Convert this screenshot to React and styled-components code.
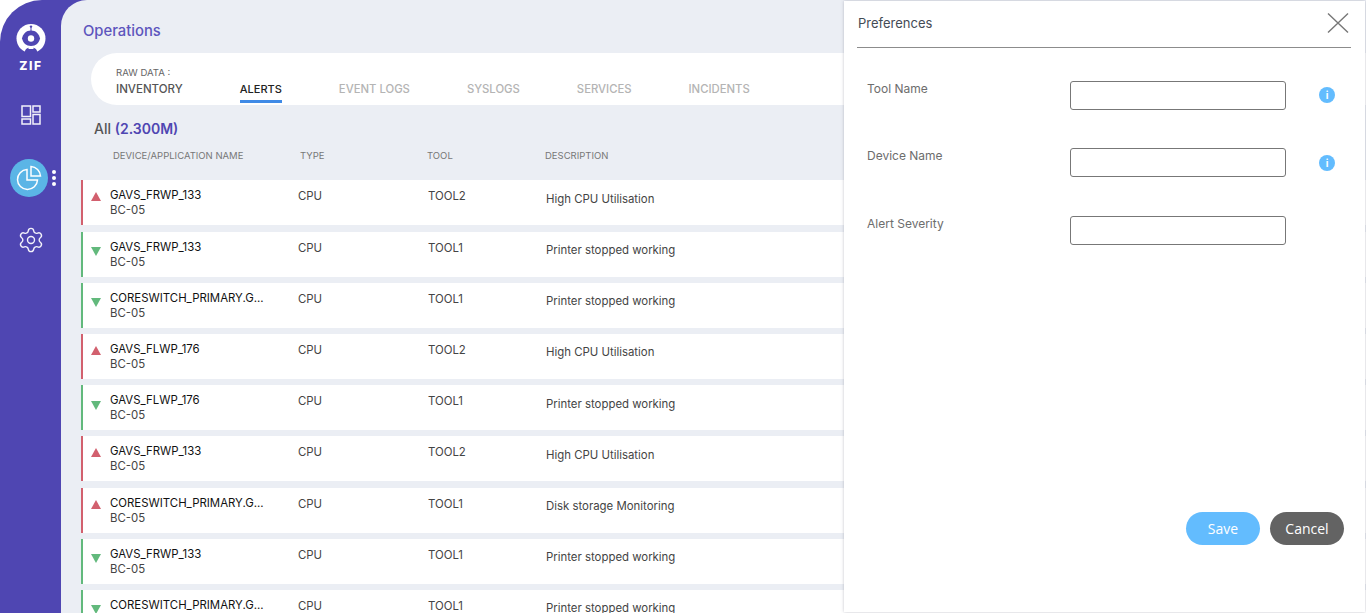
import styled, { createGlobalStyle } from "styled-components";
import { Settings } from "lucide-react";

const GlobalStyle = createGlobalStyle`
  html, body {
    margin: 0;
    padding: 0;
    height: 100%;
    background: #fff;
    overflow: hidden;
    font-family: Inter, "Liberation Sans", sans-serif;
  }
  * {
    box-sizing: border-box;
  }
`;

const Shell = styled.div`
  position: relative;
  display: flex;
  width: 1366px;
  height: 613px;
  overflow: hidden;
  background: #4f46b2;
  border-top-left-radius: 42px;
`;

const Sidebar = styled.nav`
  flex: 0 0 61px;
  display: flex;
  flex-direction: column;
  align-items: center;
  padding-top: 24px;
`;

const Logo = styled.div`
  display: flex;
  flex-direction: column;
  align-items: center;
  height: 76px;
  padding-left: 1px;
`;

const LogoText = styled.span`
  margin-top: 6px;
  font-size: 12px;
  font-weight: 800;
  letter-spacing: 1.6px;
  color: #fff;
  line-height: 13px;
`;

const NavIcon = styled.div`
  display: flex;
  justify-content: center;
  align-items: center;
  height: 30px;
  margin-bottom: ${(p) => p.$gap}px;
  color: #f2f1fa;
`;

const ActiveWrap = styled.div`
  display: flex;
  align-items: center;
  gap: 4px;
  width: 61px;
  padding-left: 10px;
  margin-bottom: 28px;
`;

const ActiveCircle = styled.div`
  display: flex;
  justify-content: center;
  align-items: center;
  width: 38px;
  height: 38px;
  border-radius: 50%;
  background: #5bb5e6;
`;

const Dots = styled.div`
  display: flex;
  flex-direction: column;
  gap: 2px;
`;

const Dot = styled.span`
  width: 4px;
  height: 4px;
  border-radius: 50%;
  background: #fff;
`;

const Main = styled.main`
  flex: 1;
  min-width: 0;
  background: #ebeef4;
  border-top-left-radius: 26px;
  padding: 22px 0 0 20px;
`;

const PageTitle = styled.h1`
  margin: 0 0 13px 2px;
  font-size: 14.8px;
  line-height: 18px;
  font-weight: 500;
  color: #5d55bd;
`;

const TabBar = styled.div`
  display: flex;
  align-items: flex-end;
  gap: 57px;
  height: 52px;
  margin-left: 10px;
  padding: 0 0 2px 25px;
  background: #fff;
  border-radius: 26px 0 0 26px;
`;

const TabGroup = styled.div`
  display: flex;
  flex-direction: column;
`;

const RawLabel = styled.span`
  font-size: 9.6px;
  line-height: 12px;
  color: #666;
  margin-bottom: 2px;
`;

const Tab = styled.span`
  display: block;
  height: 22px;
  padding-top: 1px;
  font-size: ${(p) => (p.$active ? 11 : p.$muted ? 11.3 : 11.5)}px;
  line-height: 14px;
  font-weight: 500;
  color: ${(p) => (p.$active ? "#222" : p.$muted ? "#b4b4b4" : "#555")};
  border-bottom: ${(p) => (p.$active ? "3px solid #3f8ae6" : "none")};
`;

const CountLine = styled.div`
  margin: 15px 0 0 13px;
  font-size: 14px;
  line-height: 18px;
  font-weight: 500;
  color: #555;
`;

const Count = styled.span`
  color: #4f46b2;
  font-weight: 600;
`;

const Columns = styled.div`
  display: grid;
  grid-template-columns: 187px 127px 118px 1fr;
  margin: 10px 0 0 32px;
  height: 32.4px;
  padding-top: 2px;
  font-size: 9.5px;
  line-height: 12px;
  color: #777;
`;

const Row = styled.div`
  display: grid;
  grid-template-columns: 27px 188px 130px 118px 1fr;
  height: 45px;
  margin-bottom: 6.2px;
  background: #fff;
  border-left: 2px solid ${(p) => (p.$up ? "#d2606e" : "#62b97c")};
  align-items: start;
  font-size: 11.4px;
  line-height: 15px;
  color: #444;
`;

const Marker = styled.div`
  width: 0;
  height: 0;
  margin: ${(p) => (p.$up ? 12 : 15.5)}px 0 0 8px;
  border-left: 5px solid transparent;
  border-right: 5px solid transparent;
  border-bottom: ${(p) => (p.$up ? "9px solid #d2606e" : "none")};
  border-top: ${(p) => (p.$up ? "none" : "9px solid #62b97c")};
`;

const NameCell = styled.div`
  padding-top: 8px;
`;

const DeviceName = styled.div`
  color: #111;
`;

const Cell = styled.div`
  padding-top: ${(p) => p.$top}px;
`;

const Drawer = styled.aside`
  position: absolute;
  top: 1px;
  right: 1px;
  bottom: 1px;
  width: 521px;
  display: flex;
  flex-direction: column;
  background: #fff;
  box-shadow: 0 0 3px rgba(90, 90, 110, 0.35);
  padding: 0 14px 67px 13px;
`;

const DrawerHead = styled.header`
  display: flex;
  justify-content: space-between;
  align-items: center;
  height: 47px;
  padding: 0 2px 3px 1px;
  border-bottom: 1px solid #8c8c8c;
  font-size: 13px;
  color: #444b55;
`;

const CloseIcon = styled.svg`
  width: 22px;
  height: 22px;
`;

const Form = styled.form`
  flex: 1;
  padding: 33px 0 0 10px;
`;

const Field = styled.div`
  display: grid;
  grid-template-columns: 203px 216px 49px;
  align-items: start;
  height: ${(p) => p.$h}px;
`;

const FieldLabel = styled.label`
  font-size: 12px;
  line-height: 16px;
  color: #6d6d6d;
`;

const FieldInput = styled.input`
  width: 216px;
  height: 29px;
  border: 1px solid #777;
  border-radius: 3px;
  background: #fff;
`;

const Info = styled.span`
  justify-self: end;
  display: flex;
  justify-content: center;
  align-items: center;
  width: 16px;
  height: 16px;
  margin-top: ${(p) => p.$top}px;
  border-radius: 50%;
  background: #63bcfe;
  color: #fff;
  font-size: 10px;
  font-weight: 700;
`;

const Actions = styled.div`
  display: flex;
  justify-content: flex-end;
  gap: 10px;
  padding-right: 7px;
`;

const ActionButton = styled.button`
  width: 74px;
  height: 33px;
  border: none;
  border-radius: 17px;
  background: ${(p) => (p.$primary ? "#63bcfe" : "#636363")};
  color: #fff;
  font-family: "Open Sans", sans-serif;
  font-size: 14px;
`;

const tabs = ["ALERTS", "EVENT LOGS", "SYSLOGS", "SERVICES", "INCIDENTS"];

const rows = [
  { up: true, name: "GAVS_FRWP_133", tool: "TOOL2", desc: "High CPU Utilisation" },
  { up: false, name: "GAVS_FRWP_133", tool: "TOOL1", desc: "Printer stopped working" },
  { up: false, name: "CORESWITCH_PRIMARY.G...", tool: "TOOL1", desc: "Printer stopped working" },
  { up: true, name: "GAVS_FLWP_176", tool: "TOOL2", desc: "High CPU Utilisation" },
  { up: false, name: "GAVS_FLWP_176", tool: "TOOL1", desc: "Printer stopped working" },
  { up: true, name: "GAVS_FRWP_133", tool: "TOOL2", desc: "High CPU Utilisation" },
  { up: true, name: "CORESWITCH_PRIMARY.G...", tool: "TOOL1", desc: "Disk storage Monitoring" },
  { up: false, name: "GAVS_FRWP_133", tool: "TOOL1", desc: "Printer stopped working" },
  { up: false, name: "CORESWITCH_PRIMARY.G...", tool: "TOOL1", desc: "Printer stopped working" },
];

const fields = [
  { label: "Tool Name", info: true, h: 67, top: 6 },
  { label: "Device Name", info: true, h: 68, top: 7 },
  { label: "Alert Severity", info: false, h: 40, top: 0 },
];

function ZifMark() {
  return (
    <svg width="30" height="29" viewBox="0 0 30 29">
      <circle cx="15" cy="14.5" r="14.5" fill="#fff" />
      <circle cx="15" cy="2.6" r="1.2" fill="#4f46b2" />
      <rect x="14.5" y="3" width="1" height="4" fill="#4f46b2" />
      <path
        d="M15 6.5C20 6.5 23 10 24 14.5C23 19 20 22 15 22S7 19 6 14.5C7 10 10 6.5 15 6.5Z"
        fill="#4f46b2"
      />
      <circle cx="15" cy="14.5" r="3.2" fill="#fff" />
      <path d="M8.5 29C9 25 11 23.5 15 23.5S21 25 21.5 29Z" fill="#4f46b2" />
      <rect x="12.5" y="22" width="5" height="3" fill="#fff" />
    </svg>
  );
}

function LayoutIcon() {
  return (
    <svg width="20" height="20" viewBox="0 0 20 20" fill="none" stroke="currentColor" strokeWidth="1.5">
      <rect x="1" y="1" width="8.5" height="10.5" />
      <rect x="12" y="1" width="7" height="6" />
      <rect x="1" y="14" width="8.5" height="5" />
      <rect x="12" y="9.5" width="7" height="9.5" />
    </svg>
  );
}

function PieIcon() {
  return (
    <svg width="26" height="26" viewBox="0 0 26 26" fill="none" stroke="#fff" strokeWidth="1.5">
      <path d="M11 4.5A10 10 0 1 0 21.5 15H11Z" />
      <path d="M15 1.5A10 10 0 0 1 24.5 11H15Z" />
    </svg>
  );
}

export default function App() {
  return (
    <>
      <GlobalStyle />
      <Shell>
        <Sidebar>
          <Logo>
            <ZifMark />
            <LogoText>ZIF</LogoText>
          </Logo>
          <NavIcon $gap={29}>
            <LayoutIcon />
          </NavIcon>
          <ActiveWrap>
            <ActiveCircle>
              <PieIcon />
            </ActiveCircle>
            <Dots>
              <Dot />
              <Dot />
              <Dot />
            </Dots>
          </ActiveWrap>
          <NavIcon $gap={0}>
            <Settings size={28} strokeWidth={1.2} />
          </NavIcon>
        </Sidebar>

        <Main>
          <PageTitle>Operations</PageTitle>
          <TabBar>
            <TabGroup>
              <RawLabel>RAW DATA :</RawLabel>
              <Tab>INVENTORY</Tab>
            </TabGroup>
            {tabs.map((tab, i) => (
              <Tab key={tab} $active={i === 0} $muted={i > 0}>
                {tab}
              </Tab>
            ))}
          </TabBar>

          <CountLine>
            All <Count>(2.300M)</Count>
          </CountLine>
          <Columns>
            <span>DEVICE/APPLICATION NAME</span>
            <span>TYPE</span>
            <span>TOOL</span>
            <span>DESCRIPTION</span>
          </Columns>

          {rows.map((row, i) => (
            <Row key={i} $up={row.up}>
              <Marker $up={row.up} />
              <NameCell>
                <DeviceName>{row.name}</DeviceName>
                <div>BC-05</div>
              </NameCell>
              <Cell $top={9}>CPU</Cell>
              <Cell $top={9}>{row.tool}</Cell>
              <Cell $top={11.5}>{row.desc}</Cell>
            </Row>
          ))}
        </Main>

        <Drawer>
          <DrawerHead>
            Preferences
            <CloseIcon viewBox="0 0 22 22" stroke="#777" strokeWidth="1.4">
              <path d="M1 1.5 21 20.5M21 1.5 1 20.5" />
            </CloseIcon>
          </DrawerHead>
          <Form>
            {fields.map((field) => (
              <Field key={field.label} $h={field.h}>
                <FieldLabel>{field.label}</FieldLabel>
                <FieldInput />
                {field.info && <Info $top={field.top}>i</Info>}
              </Field>
            ))}
          </Form>
          <Actions>
            <ActionButton type="button" $primary>
              Save
            </ActionButton>
            <ActionButton type="button">Cancel</ActionButton>
          </Actions>
        </Drawer>
      </Shell>
    </>
  );
}
